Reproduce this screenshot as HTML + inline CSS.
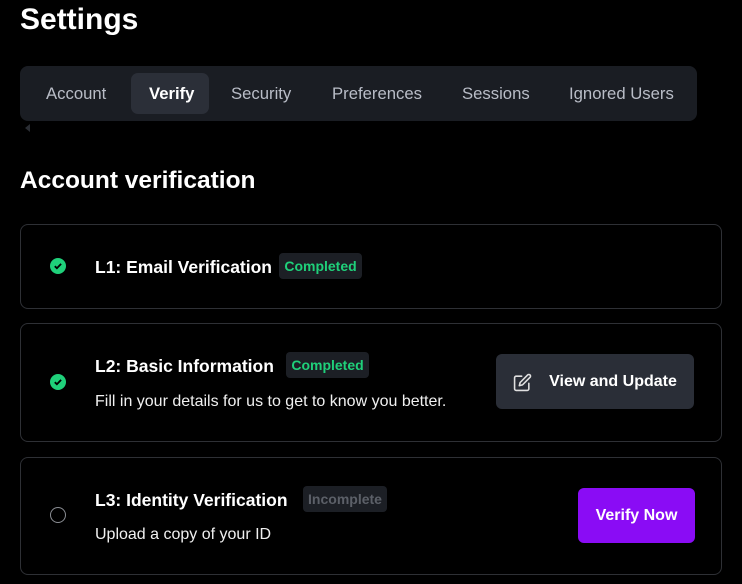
<!DOCTYPE html>
<html><head><style>
body{margin:0;background:#000;width:742px;height:584px;overflow:hidden;font-family:"Liberation Sans",sans-serif;color:#fff;position:relative}
.a{position:absolute}
h1{position:absolute;left:20px;top:3px;margin:0;font-size:30px;font-weight:bold}
.tabs{left:20px;top:66px;width:677px;height:55px;background:#1a1d23;border-radius:8px}
.tab{position:absolute;top:0;line-height:55px;font-size:16.7px;color:#b9bdc7}
.act{left:111px;top:7px;width:78px;height:41px;background:#2b2f38;border-radius:7px}
h2{position:absolute;left:20px;top:167px;margin:0;font-size:24.5px;font-weight:bold}
.card{position:absolute;left:20px;width:700px;border:1px solid #2e3035;border-radius:8px}
.t{position:absolute;font-size:17.5px;font-weight:bold;white-space:nowrap}
.badge{position:absolute;height:26px;line-height:26px;background:#1c1f25;border-radius:4px;font-size:14px;text-align:center;font-weight:bold}
.d{position:absolute;font-size:16px;color:#f0f0f0}
.btn{position:absolute;border-radius:6px;font-size:16px;font-weight:bold;text-align:center}
</style></head><body>
<h1>Settings</h1>
<div class="a tabs">
<div class="a act"></div>
<div class="tab" style="left:26px">Account</div>
<div class="tab" style="left:129px;color:#fff;font-weight:bold">Verify</div>
<div class="tab" style="left:211px">Security</div>
<div class="tab" style="left:312px">Preferences</div>
<div class="tab" style="left:442px">Sessions</div>
<div class="tab" style="left:549px">Ignored Users</div>
</div>
<div class="a" style="left:25px;top:124px;width:0;height:0;border-top:4px solid transparent;border-bottom:4px solid transparent;border-right:5px solid #2a2d33"></div>
<h2>Account verification</h2>

<div class="card" style="top:224px;height:83px">
<svg class="a" style="left:29px;top:33px" width="16" height="16" viewBox="0 0 16 16"><circle cx="8" cy="8" r="8" fill="#1fd07a"/><path d="M4.8 8.2l2.1 2 4.2-4.3" stroke="#000" stroke-width="1.8" fill="none"/></svg>
<div class="t" style="left:74px;top:32px">L1: Email Verification</div>
<div class="badge" style="left:258px;top:28px;width:83px;color:#1fd07a">Completed</div>
</div>

<div class="card" style="top:323px;height:117px">
<svg class="a" style="left:29px;top:50px" width="16" height="16" viewBox="0 0 16 16"><circle cx="8" cy="8" r="8" fill="#1fd07a"/><path d="M4.8 8.2l2.1 2 4.2-4.3" stroke="#000" stroke-width="1.8" fill="none"/></svg>
<div class="t" style="left:74px;top:32px">L2: Basic Information</div>
<div class="badge" style="left:265px;top:28px;width:83px;color:#1fd07a">Completed</div>
<div class="d" style="left:74px;top:69px">Fill in your details for us to get to know you better.</div>
<div class="btn" style="left:475px;top:30px;width:198px;height:55px;line-height:55px;background:#2a2e37;text-indent:36px">View and Update</div>
<svg class="a" style="left:492px;top:49px" width="19" height="19" viewBox="0 0 24 24" fill="none" stroke="#e0e0e0" stroke-width="2" stroke-linecap="round" stroke-linejoin="round"><path d="M11 4H4a2 2 0 0 0-2 2v14a2 2 0 0 0 2 2h14a2 2 0 0 0 2-2v-7"/><path d="M18.5 2.5a2.1 2.1 0 0 1 3 3L12 15l-4 1 1-4z"/></svg>
</div>

<div class="card" style="top:457px;height:116px">
<div class="a" style="left:29px;top:49px;width:14px;height:14px;border:1.5px solid #8a8d93;border-radius:50%"></div>
<div class="t" style="left:74px;top:32px">L3: Identity Verification</div>
<div class="badge" style="left:282px;top:28px;width:84px;color:#5c6068">Incomplete</div>
<div class="d" style="left:74px;top:68px">Upload a copy of your ID</div>
<div class="btn" style="left:557px;top:30px;width:117px;height:55px;line-height:55px;background:#8a0cf5">Verify Now</div>
</div>
</body></html>
